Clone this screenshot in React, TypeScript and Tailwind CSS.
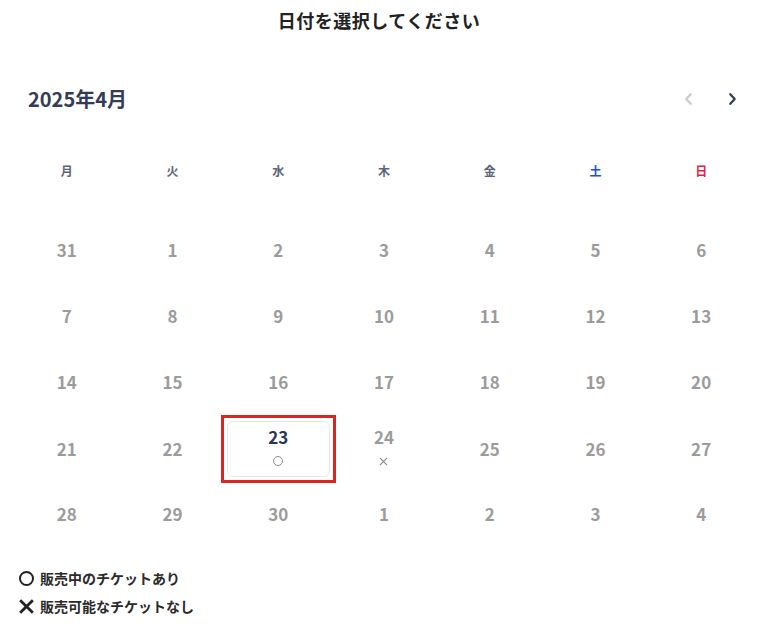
import React, { useState } from 'react';

type Mark = 'available' | 'soldout' | null;

interface DayCell {
  day: number;
  inMonth: boolean;
  mark: Mark;
}

const WEEKDAYS = [
  { label: '月', color: 'text-[#5b6478]' },
  { label: '火', color: 'text-[#5b6478]' },
  { label: '水', color: 'text-[#5b6478]' },
  { label: '木', color: 'text-[#5b6478]' },
  { label: '金', color: 'text-[#5b6478]' },
  { label: '土', color: 'text-[#1d4ed8]' },
  { label: '日', color: 'text-[#e11d48]' },
];

// April 2025, weeks starting on Monday
const buildWeeks = (): DayCell[][] => {
  const cells: DayCell[] = [{ day: 31, inMonth: false, mark: null }];
  for (let d = 1; d <= 30; d++) {
    let mark: Mark = null;
    if (d === 23) mark = 'available';
    if (d === 24) mark = 'soldout';
    cells.push({ day: d, inMonth: true, mark });
  }
  for (let d = 1; d <= 4; d++) cells.push({ day: d, inMonth: false, mark: null });
  const weeks: DayCell[][] = [];
  for (let i = 0; i < cells.length; i += 7) weeks.push(cells.slice(i, i + 7));
  return weeks;
};

const ChevronLeft: React.FC<{ className?: string }> = ({ className }) => (
  <svg viewBox="0 0 10 16" className={className} fill="none" stroke="currentColor" strokeWidth="2.6" strokeLinecap="round" strokeLinejoin="round">
    <path d="M7.5 2.5 2.5 8l5 5.5" />
  </svg>
);

const ChevronRight: React.FC<{ className?: string }> = ({ className }) => (
  <svg viewBox="0 0 10 16" className={className} fill="none" stroke="currentColor" strokeWidth="2.6" strokeLinecap="round" strokeLinejoin="round">
    <path d="M2.5 2.5 7.5 8l-5 5.5" />
  </svg>
);

const DayContent: React.FC<{ cell: DayCell; selected: boolean }> = ({ cell, selected }) => (
  <>
    <span
      className={`h-[24px] leading-[24px] text-[17px] font-bold ${
        selected ? 'text-[#2d3653]' : 'text-[#9b9b9b]'
      }`}
    >
      {cell.day}
    </span>
    {cell.mark && (
      <span className="h-[24px] flex items-center justify-center">
        {cell.mark === 'available' ? (
          <span className="w-[10px] h-[10px] rounded-full border border-[#8a8d96]" />
        ) : (
          <svg viewBox="0 0 10 10" className="w-[9px] h-[9px] text-[#8a8d96]" stroke="currentColor" strokeWidth="1.4">
            <path d="M1 1l8 8M9 1 1 9" />
          </svg>
        )}
      </span>
    )}
  </>
);

const App: React.FC = () => {
  const [selected, setSelected] = useState<number>(23);
  const weeks = buildWeeks();

  return (
    <div className="w-[758px] h-[632px] bg-white text-[#222] font-['Noto_Sans_CJK_JP','Noto_Sans',sans-serif]">
      <div className="h-[40px] flex items-center justify-center text-[18px] font-bold text-[#222] tracking-[0.5px]">
        日付を選択してください
      </div>

      <div className="mt-[39px] h-[40px] flex items-center justify-between pl-[28px] pr-[18px]">
        <h2 className="text-[20px] font-bold text-[#333c57]">2025年4月</h2>
        <div className="flex items-center gap-[28px]">
          <button className="w-[16px] h-[20px] flex items-center justify-center text-[#c9cbd0]">
            <ChevronLeft className="w-[9px] h-[14px]" />
          </button>
          <button className="w-[16px] h-[20px] flex items-center justify-center text-[#373e55]">
            <ChevronRight className="w-[9px] h-[14px]" />
          </button>
        </div>
      </div>

      <div className="mt-[32px] pl-[14px] pr-[4px]">
        <div className="grid grid-cols-7 h-[40px]">
          {WEEKDAYS.map((w) => (
            <div key={w.label} className={`flex items-center justify-center text-[12px] font-bold ${w.color}`}>
              {w.label}
            </div>
          ))}
        </div>

        <div className="mt-[26px]">
          {weeks.map((week, wi) => (
            <div key={wi} className="grid grid-cols-7 h-[66px]">
              {week.map((c, ci) => {
                const isSelected = c.inMonth && c.day === selected;
                return (
                  <div key={ci} className="flex items-center justify-center">
                    {isSelected ? (
                      <div className="border-[3px] border-[#dc2424] p-[3px]">
                        <button className="w-[103px] h-[56px] flex flex-col items-center justify-center rounded-md border border-[#e6e7ea]">
                          <DayContent cell={c} selected />
                        </button>
                      </div>
                    ) : (
                      <button
                        onClick={() => c.mark === 'available' && setSelected(c.day)}
                        className="w-[103px] h-[56px] flex flex-col items-center justify-center"
                      >
                        <DayContent cell={c} selected={false} />
                      </button>
                    )}
                  </div>
                );
              })}
            </div>
          ))}
        </div>
      </div>

      <div className="mt-[17px] pl-[19px] flex flex-col text-[14px] font-bold text-[#2a2a2a]">
        <div className="h-[28px] flex items-center gap-[6px]">
          <span className="w-[15px] h-[15px] rounded-full border-2 border-[#222]" />
          <span>販売中のチケットあり</span>
        </div>
        <div className="h-[28px] flex items-center gap-[6px]">
          <svg viewBox="0 0 14 14" className="w-[15px] h-[15px] text-[#222]" stroke="currentColor" strokeWidth="2.6" strokeLinecap="square">
            <path d="M2 2l10 10M12 2 2 12" />
          </svg>
          <span>販売可能なチケットなし</span>
        </div>
      </div>
    </div>
  );
};

export default App;
